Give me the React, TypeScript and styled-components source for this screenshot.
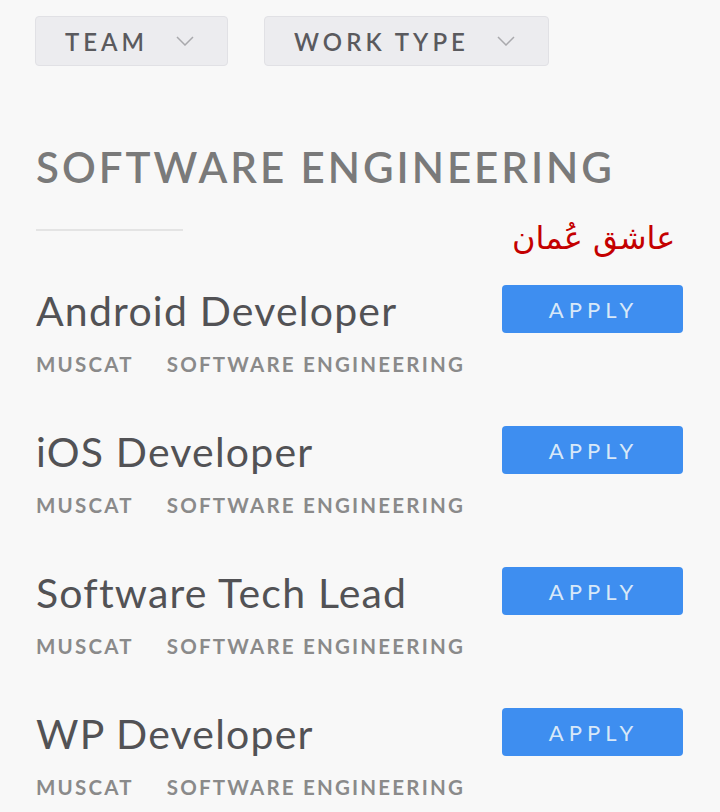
import styled, { createGlobalStyle } from 'styled-components';

const GlobalStyle = createGlobalStyle`
  html, body {
    margin: 0;
    padding: 0;
    background: #f8f8f8;
  }
  body {
    font-family: Lato, "Open Sans", sans-serif;
  }
`;

const Page = styled.div`
  position: relative;
  height: 812px;
  padding: 16px 37px 0 36px;
  box-sizing: border-box;
  overflow: hidden;
`;

const FilterRow = styled.div`
  display: flex;
  gap: 36px;
  margin-left: -1px;
`;

const FilterButton = styled.button`
  display: flex;
  align-items: center;
  gap: 28px;
  height: 50px;
  padding: 0 33px 0 29px;
  background: #ececef;
  border: 1px solid #e1e1e5;
  border-radius: 4px;
  font-family: Lato, sans-serif;
  font-size: 24px;
  font-weight: 600;
  letter-spacing: 4px;
  color: #5a5a5e;
  cursor: pointer;
`;

const Heading = styled.h2`
  margin: 80px 0 0;
  font-size: 42px;
  line-height: 1;
  font-weight: 600;
  letter-spacing: 3px;
  color: #7a7a7a;
`;

const Divider = styled.hr`
  width: 147px;
  margin: 41px 0 0;
  border: 0;
  border-top: 2px solid #e4e4e4;
`;

const Watermark = styled.div`
  position: absolute;
  top: 219px;
  left: 512px;
  direction: rtl;
  font-family: "DejaVu Sans", sans-serif;
  font-size: 32px;
  color: #c40000;
`;

const JobList = styled.div`
  display: flex;
  flex-direction: column;
  margin-top: 54px;
`;

const JobRow = styled.div`
  display: flex;
  justify-content: space-between;
  align-items: flex-start;
  height: 141px;
`;

const JobInfo = styled.div`
  display: flex;
  flex-direction: column;
`;

const JobTitle = styled.div`
  margin-top: 5px;
  font-size: 41px;
  line-height: 1;
  letter-spacing: 1.2px;
  color: #525255;
`;

const Meta = styled.div`
  display: flex;
  gap: 33px;
  margin-top: 23px;
  font-size: 20.5px;
  line-height: 1;
  font-weight: 700;
  letter-spacing: 2.2px;
  color: #8a8a8a;
`;

const ApplyButton = styled.button`
  width: 181px;
  height: 48px;
  padding: 0 0 0 2px;
  border: 0;
  border-radius: 4px;
  background: #3e8ef0;
  color: #d8e8f8;
  font-family: Lato, sans-serif;
  font-size: 22px;
  letter-spacing: 5px;
  cursor: pointer;
`;

function Chevron() {
  return (
    <svg width="18" height="10" viewBox="0 0 18 10" fill="none">
      <polyline points="1,1 9,9 17,1" stroke="#a9a9ad" strokeWidth="1.5" />
    </svg>
  );
}

const jobs = ['Android Developer', 'iOS Developer', 'Software Tech Lead', 'WP Developer'];

export default function App(): JSX.Element {
  return (
    <>
      <GlobalStyle />
      <Page>
        <FilterRow>
          <FilterButton>
            TEAM <Chevron />
          </FilterButton>
          <FilterButton>
            WORK TYPE <Chevron />
          </FilterButton>
        </FilterRow>

        <Heading>SOFTWARE ENGINEERING</Heading>
        <Divider />
        <Watermark>عاشق عُمان</Watermark>

        <JobList>
          {jobs.map((job) => (
            <JobRow key={job}>
              <JobInfo>
                <JobTitle>{job}</JobTitle>
                <Meta>
                  <span>MUSCAT</span>
                  <span>SOFTWARE ENGINEERING</span>
                </Meta>
              </JobInfo>
              <ApplyButton>APPLY</ApplyButton>
            </JobRow>
          ))}
        </JobList>
      </Page>
    </>
  );
}
